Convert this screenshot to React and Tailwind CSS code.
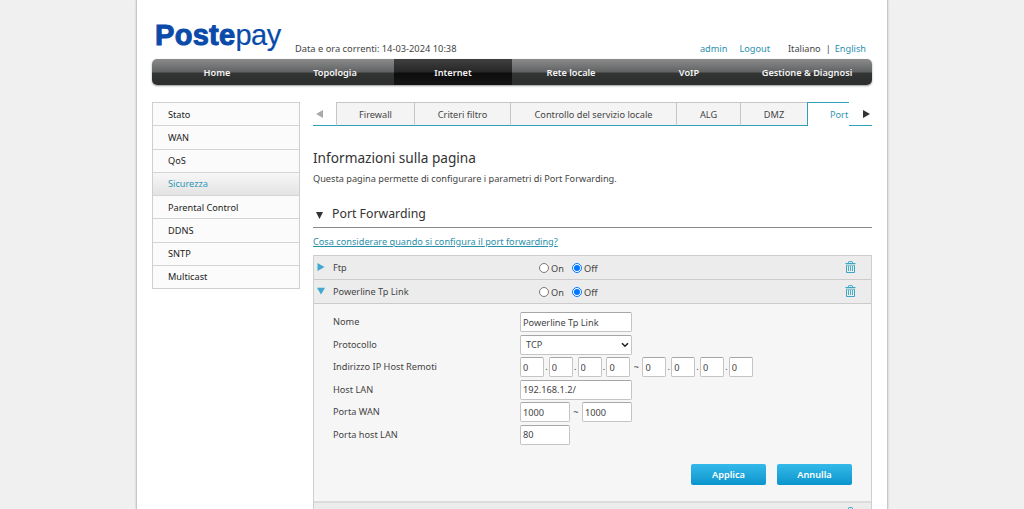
import React, { useState } from 'react';

const navItems = ['Home', 'Topologia', 'Internet', 'Rete locale', 'VoIP', 'Gestione & Diagnosi'];

const sideItems = ['Stato', 'WAN', 'QoS', 'Sicurezza', 'Parental Control', 'DDNS', 'SNTP', 'Multicast'];

const tabs = [
  { label: 'Firewall', width: 'w-[78px]' },
  { label: 'Criteri filtro', width: 'w-[96px]' },
  { label: 'Controllo del servizio locale', width: 'w-[166px]' },
  { label: 'ALG', width: 'w-[64px]' },
  { label: 'DMZ', width: 'w-[67px]' },
];

const TrashIcon = () => (
  <svg width="11" height="12" viewBox="0 0 11 12" fill="none" stroke="#3ba7c4">
    <path d="M0.5 2.5H10.5M3.5 2.5V1.2Q3.5 0.6 4.2 0.6H6.8Q7.5 0.6 7.5 1.2V2.5" />
    <path d="M1.5 4.5V11.5H9.5V4.5" />
    <path d="M3.5 5V10M5.5 5V10M7.5 5V10" strokeWidth="0.9" />
    <path d="M1 4.2H10" strokeWidth="0.8" />
  </svg>
);

const OnOff = ({ name }) => (
  <div className="flex h-full items-center pt-[3px]">
    <label className="flex w-[33px] items-center gap-[2px]">
      <input type="radio" name={name} className="-mt-[2px] h-[10px] w-[10px]" />
      On
    </label>
    <label className="flex items-center gap-[2px]">
      <input type="radio" name={name} defaultChecked className="-mt-[2px] h-[10px] w-[10px]" />
      Off
    </label>
  </div>
);

const RuleHeader = ({ name, open, onToggle }) => (
  <div className="flex h-[24px] items-center border-t border-[#cbcbcb] bg-[#ececec] pl-[3px]">
    <button onClick={onToggle} className="flex h-full w-[222px] items-center text-left">
      <svg className="-mt-[2px]" width="8" height="8" viewBox="0 0 8 8" fill="#3fa9d0">
        {open ? <path d="M0 0.8H8L4 7.5Z" /> : <path d="M0.5 0L7.5 4L0.5 8Z" />}
      </svg>
      <span className="ml-[8px]">{name}</span>
    </button>
    <div className="flex h-full w-[306px] items-center">
      <OnOff name={name} />
    </div>
    <div className="-mt-[1px]">
      <TrashIcon />
    </div>
  </div>
);

const Field = ({ label, children }) => (
  <div className="flex h-[22.5px] items-center">
    <span className="w-[187px]">{label}</span>
    <div className="flex items-center">{children}</div>
  </div>
);

const TextInput = ({ value, className }) => (
  <input
    defaultValue={value}
    className={`h-[20px] rounded-[2px] border border-[#c4c4c4] border-t-[#a6a6a6] bg-white pl-[2px] text-[#444] outline-none ${className}`}
  />
);

const IpInput = () => (
  <div className="flex items-center">
    {[0, 1, 2, 3].map((i) => (
      <React.Fragment key={i}>
        {i > 0 && <span className="w-[4.8px] text-center">.</span>}
        <TextInput value="0" className="w-[24px]" />
      </React.Fragment>
    ))}
  </div>
);

const ActionButton = ({ children }) => (
  <button className="h-[21px] w-[75px] rounded-[2px] bg-gradient-to-b from-[#33b9ea] to-[#0795cc] pt-px font-semibold text-white">
    {children}
  </button>
);

const RuleForm = () => (
  <div className="h-[198px] border-t border-[#cbcbcb] bg-[#f6f6f6] pt-[7px] pl-[19px]">
    <Field label="Nome">
      <TextInput value="Powerline Tp Link" className="w-[112px]" />
    </Field>
    <Field label="Protocollo">
      <div className="relative">
        <select className="block h-[20px] w-[112px] appearance-none rounded-[2px] border border-[#c4c4c4] border-t-[#a6a6a6] bg-white pl-[5px] text-[#444] outline-none">
          <option>TCP</option>
          <option>UDP</option>
        </select>
        <svg className="pointer-events-none absolute top-[7px] right-[3px]" width="8" height="6" viewBox="0 0 8 6" fill="none" stroke="#222" strokeWidth="1.6">
          <path d="M1 1.2L4 4.2L7 1.2" />
        </svg>
      </div>
    </Field>
    <Field label="Indirizzo IP Host Remoti">
      <IpInput />
      <span className="w-[12px] text-center">~</span>
      <IpInput />
    </Field>
    <Field label="Host LAN">
      <TextInput value="192.168.1.2/" className="w-[112px]" />
    </Field>
    <Field label="Porta WAN">
      <TextInput value="1000" className="w-[50px]" />
      <span className="w-[12px] text-center">~</span>
      <TextInput value="1000" className="w-[50px]" />
    </Field>
    <Field label="Porta host LAN">
      <TextInput value="80" className="w-[50px]" />
    </Field>
    <div className="mt-[18px] flex justify-end gap-[11px] pr-[19px]">
      <ActionButton>Applica</ActionButton>
      <ActionButton>Annulla</ActionButton>
    </div>
  </div>
);

const Sidebar = () => (
  <div className="flex h-[187px] w-[148px] shrink-0 flex-col border border-[#cfcfcf]">
    {sideItems.map((item) => (
      <a
        key={item}
        href="#"
        className={`flex min-h-0 flex-1 items-center border-[#d4d4d4] pt-px pl-[15px] leading-[14px] not-last:border-b ${
          item === 'Sicurezza' ? 'bg-gradient-to-b from-[#f7f7f7] to-[#e3e3e3] text-[#2f97b7]' : 'bg-[#fbfbfb] text-[#222]'
        }`}
      >
        {item}
      </a>
    ))}
  </div>
);

const TabBar = () => (
  <div className="flex h-[24px] w-[559px]">
    <div className="flex w-[23px] items-center border-b border-b-[#2f9fba] pl-[3px]">
      <svg width="7" height="8" viewBox="0 0 7 8" fill="#a9a9a9">
        <path d="M7 0V8L0 4Z" />
      </svg>
    </div>
    {tabs.map((tab) => (
      <a
        key={tab.label}
        href="#"
        className={`flex items-center justify-center border-t border-b border-l border-t-[#c6c6c6] border-b-[#2f9fba] border-l-[#c6c6c6] bg-[#f4f4f4] pt-px whitespace-nowrap ${tab.width}`}
      >
        {tab.label}
      </a>
    ))}
    <a href="#" className="flex w-[42px] items-center overflow-hidden border-t border-l border-[#2f9fba] pl-[22px] whitespace-nowrap text-[#2f97b7]">
      Port
    </a>
    <div className="flex flex-1 items-center border-b border-b-[#2f9fba] pl-[14px]">
      <svg width="7" height="8" viewBox="0 0 7 8" fill="#333">
        <path d="M0 0V8L7 4Z" />
      </svg>
    </div>
  </div>
);

export default function App() {
  const [open, setOpen] = useState(true);

  return (
    <div className="flex h-[509px] justify-center overflow-hidden bg-[#f0f0f0] font-['Noto_Sans',sans-serif] text-[9.2px] text-[#444]">
      <div className="w-[752px] border-x border-[#c8c8c8] bg-white px-[15px] shadow-[0_0_2px_rgba(0,0,0,0.2)]">
        <div className="flex h-[59px] items-end">
          <div
            className="ml-[3px] flex h-[42px] w-[140px] items-baseline text-[29px] leading-[36px] text-[#0a4baa]"
            style={{ fontFamily: '"Liberation Sans", Arial, sans-serif' }}
          >
            <span className="font-bold tracking-[0.3px] [-webkit-text-stroke:1px_#0a4baa]">Poste</span>
            <span className="tracking-[-0.5px] [-webkit-text-stroke:0.2px_#0a4baa]">pay</span>
          </div>
          <div className="flex flex-1 items-end justify-between pr-[6px] pb-[3px] leading-[14px]">
            <span className="text-[9.3px]">Data e ora correnti: 14-03-2024 10:38</span>
            <div className="flex">
              <a href="#" className="mr-[12px] text-[#2b8fb0]">admin</a>
              <a href="#" className="mr-[18px] text-[#2b8fb0]">Logout</a>
              <span className="mr-[5px]">Italiano</span>
              <span className="mr-[4px]">|</span>
              <a href="#" className="text-[#2b8fb0]">English</a>
            </div>
          </div>
        </div>

        <div className="flex h-[26px] rounded-[5px] bg-[linear-gradient(to_bottom,#8b8b8b_0%,#606263_50%,#333535_54%,#2c2e2e_100%)] px-[6px] shadow-[0_1px_2px_rgba(0,0,0,0.4)]">
          {navItems.map((item) => (
            <a
              key={item}
              href="#"
              className={`flex flex-1 items-center justify-center pt-[2px] font-semibold whitespace-nowrap text-[#f4f4f4] ${
                item === 'Internet' ? 'bg-[linear-gradient(to_bottom,#404040_0%,#262626_50%,#0c0c0c_54%,#151515_100%)]' : ''
              }`}
            >
              {item}
            </a>
          ))}
        </div>

        <div className="mt-[17px] flex gap-[13px]">
          <Sidebar />
          <div className="w-[559px]">
            <TabBar />
            <h1 className="mt-[22px] text-[13.65px] leading-[20px] text-[#333]">Informazioni sulla pagina</h1>
            <p className="mt-[4px] leading-[14px]">Questa pagina permette di configurare i parametri di Port Forwarding.</p>

            <div className="mt-[18px] flex h-[24px] items-center border-b border-[#8a8a8a] pl-[3px] text-[12.3px] text-[#333]">
              <svg width="7" height="7" viewBox="0 0 7 7" fill="#333">
                <path d="M0 0H7L3.5 7Z" />
              </svg>
              <span className="-mt-[3px] ml-[9px]">Port Forwarding</span>
            </div>
            <a href="#" className="mt-[7px] block leading-[14px] text-[#2b8fa8] underline">
              Cosa considerare quando si configura il port forwarding?
            </a>

            <div className="mt-[6px] border-x border-[#cfcfcf]">
              <RuleHeader name="Ftp" />
              <RuleHeader name="Powerline Tp Link" open={open} onToggle={() => setOpen(!open)} />
              {open && <RuleForm />}
              <div className="flex h-[24px] justify-end border-t-2 border-[#dcdcdc] bg-[#ececec] pt-[4px] pr-[15px]">
                <TrashIcon />
              </div>
            </div>
          </div>
        </div>
      </div>
    </div>
  );
}
